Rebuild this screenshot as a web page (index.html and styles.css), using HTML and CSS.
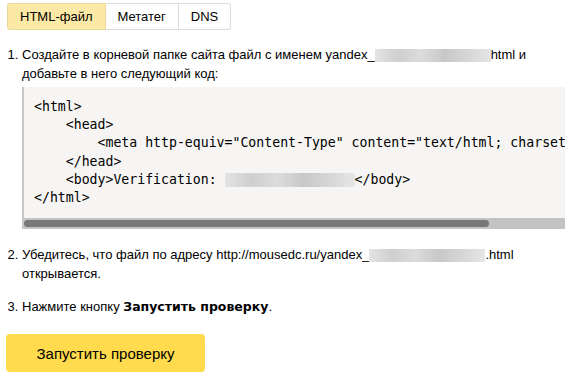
FILE: index.html
```html
<!DOCTYPE html>
<html>
<head>
    <title>Подтверждение прав</title>
    <link rel="stylesheet" href="styles.css">
</head>
<body>
    <div class="tabs">
        <span class="tab active">HTML-файл</span>
        <span class="tab">Метатег</span>
        <span class="tab">DNS</span>
    </div>

    <ol class="steps">
        <li>Создайте в корневой папке сайта файл с именем yandex_<span class="blur blur-name"></span>html и добавьте в него следующий код:
            <div class="code-box">
                <pre class="code">&lt;html&gt;
    &lt;head&gt;
        &lt;meta http-equiv="Content-Type" content="text/html; charset=UTF-8"&gt;
    &lt;/head&gt;
    &lt;body&gt;Verification: <span class="blur blur-code"></span>&lt;/body&gt;
&lt;/html&gt;</pre>
                <div class="scrollbar"><div class="thumb"></div></div>
            </div>
        </li>
        <li>Убедитесь, что файл по адресу http://mousedc.ru/yandex_<span class="blur blur-name"></span>.html открывается.</li>
        <li>Нажмите кнопку <b>Запустить проверку</b>.</li>
    </ol>

    <button class="check">Запустить проверку</button>
</body>
</html>
```

FILE: styles.css
```css
body {
    margin: 0;
    padding: 3px 12px 0 7px;
    font-family: "Liberation Sans", Arial, sans-serif;
    font-size: 13px;
    color: #000;
    background: #fff;
}

/* вкладки */
.tabs {
    display: flex;
}

.tab {
    height: 25px;
    line-height: 25px;
    padding: 0 12px;
    border: 1px solid #dcdcdc;
    border-left: none;
    color: #000;
}

.tab:first-child {
    border-left: 1px solid #dcdcdc;
    border-radius: 3px 0 0 3px;
}

.tab:last-child {
    border-radius: 0 3px 3px 0;
}

.tab.active {
    background-color: #fde9a6;
    border-color: #ecd89a;
}

/* шаги */
.steps {
    margin: 15px 0 0 0;
    padding-left: 15px;
}

.steps li {
    line-height: 19px;
    margin-bottom: 14px;
}

.steps li:first-child {
    margin-bottom: 16px;
}

.steps b {
    font-family: "DejaVu Sans", sans-serif;
    font-size: 12.5px;
}

.blur {
    display: inline-block;
    vertical-align: middle;
    height: 13px;
    background: linear-gradient(90deg, #e4e4e4 0%, #cfcfcf 20%, #dcdcdc 40%, #c8c8c8 60%, #d6d6d6 80%, #e6e6e6 100%);
}

.blur-name {
    width: 116px;
}

.blur-code {
    width: 130px;
    height: 14px;
}

/* блок кода */
.code-box {
    margin-top: 4px;
    background-color: #f6f5f3;
    border-left: 2px solid #c8c8c8;
}

.code {
    margin: 0;
    padding: 11px 10px 11px 10px;
    font-family: "DejaVu Sans Mono", monospace;
    font-size: 13.2px;
    line-height: 18.2px;
    overflow: hidden;
}

.scrollbar {
    height: 11px;
    padding: 2px 0 0 0;
    box-sizing: border-box;
    background-color: #c3c3c3;
}

.thumb {
    width: 465px;
    height: 7px;
    border-radius: 4px;
    background-color: #787878;
}

/* кнопка */
.check {
    display: block;
    margin: 18px 0 0 -1px;
    width: 199px;
    height: 38px;
    border: none;
    border-radius: 4px;
    background-color: #ffdb4d;
    font-family: "Liberation Sans", Arial, sans-serif;
    font-size: 15px;
    color: #000;
    cursor: pointer;
}
```
